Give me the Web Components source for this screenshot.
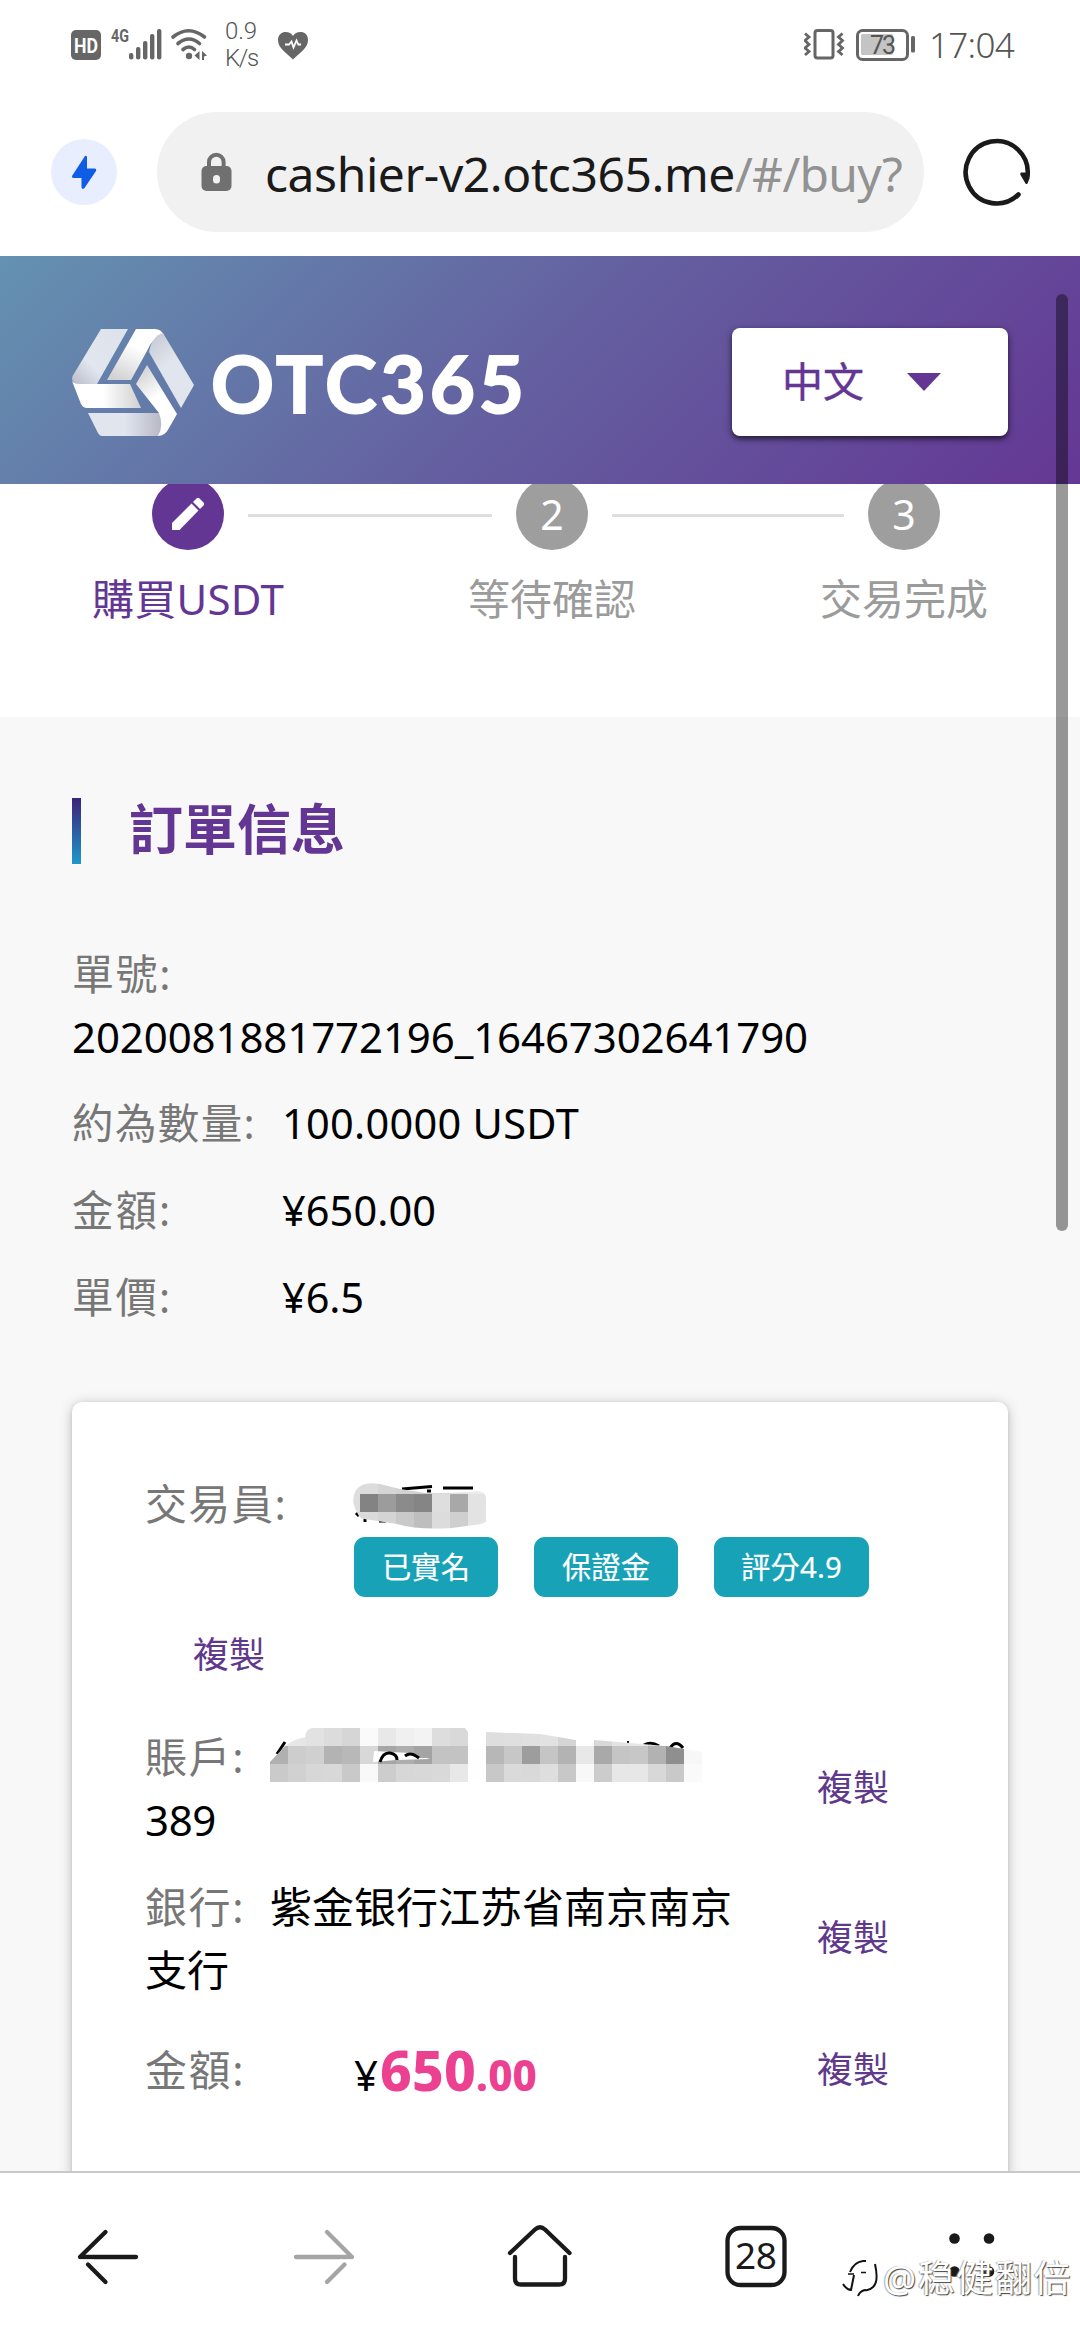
<!DOCTYPE html>
<html lang="zh-Hant">
<head>
<meta charset="utf-8">
<title>OTC365</title>
<style>
html,body{margin:0;padding:0;background:#fff}
body{width:1080px;height:2340px;overflow:hidden;font-family:"Noto Sans","Noto Sans CJK TC",sans-serif;color:#000}
</style>
</head>
<body>
<phone-screen></phone-screen>
<script>
const fits=[];
function define(name,html){
  customElements.define(name,class extends HTMLElement{
    constructor(){super();this.attachShadow({mode:'open'}).innerHTML=html;}
  });
}
/* One line of text, spaced so that it fills the width in its w attribute */
customElements.define('fit-text',class extends HTMLElement{
  constructor(){super();this.attachShadow({mode:'open'}).innerHTML='<style>:host{display:inline-block;white-space:nowrap}</style><slot></slot>';}
  connectedCallback(){if(!fits.includes(this))fits.push(this);}
  fit(){
    const w=+this.getAttribute('w'),n=[...this.textContent].length;
    this.style.letterSpacing=(w-this.getBoundingClientRect().width)/n+'px';
  }
});

define('status-bar',`<style>
:host{display:flex;height:88px;box-sizing:border-box;align-items:flex-start;color:#666;font-family:Roboto,sans-serif}
svg{display:block;flex:none}
.rate{width:53px;height:60px;margin:18px 0 0 14px;font-size:24px;line-height:27px;font-weight:300;color:#555}
.clock{margin:25px 0 0 13px;font:400 35px/40px "Noto Sans",sans-serif;font-weight:300;color:#555}
.sp{flex:1}
text{font-family:Roboto,sans-serif}
</style>
<svg width="211" height="88" viewBox="0 0 211 88">
<rect x="71" y="30" width="30" height="30" rx="5" fill="#666"/><text x="86" y="52.5" font-size="20.5" font-weight="700" fill="#fff" text-anchor="middle" textLength="24" lengthAdjust="spacingAndGlyphs">HD</text>
<text x="111" y="42" font-size="18" font-weight="700" fill="#666" textLength="18" lengthAdjust="spacingAndGlyphs">4G</text>
<g fill="#666"><rect x="129" y="53" width="4.4" height="6.5" rx="2"/><rect x="136" y="47" width="4.4" height="12.5" rx="2"/><rect x="143" y="41" width="4.4" height="18.5" rx="2"/><rect x="150" y="34" width="4.4" height="25.5" rx="2"/><rect x="157" y="29" width="4.4" height="30.5" rx="2"/></g>
<g fill="none" stroke="#666" stroke-width="3.6" stroke-linecap="round"><path d="M173 37Q188.500 24.500 204.500 37"/><path d="M178 43.500Q189 34.500 199.500 43.500"/><path d="M183 49.500Q189 44.500 194.500 49.500"/></g>
<circle cx="189" cy="56" r="3.2" fill="#666"/><path d="M199.500 51v9l-5-4.500zM202 51l5 4.500l-3 1v3.500h-2z" fill="#666"/>
</svg>
<div class="rate"><fit-text w="32">0.9</fit-text><br><fit-text w="33">K/s</fit-text></div>
<svg width="31" height="88" viewBox="277 0 31 88"><path d="M292 59.500C284 52 277 47.500 277 40C277 34.500 281 32 284.500 32C288 32 290.500 33.500 292 36C293.500 33.500 296 32 299.500 32C303.500 32 307 34.500 307 40C307 47.500 300 52 292 59.500Z" fill="#666"/><path d="M284 44.500h4l2.500-3l2 6l3-7l1.800 4h2.700" fill="none" stroke="#fff" stroke-width="1.8"/></svg>
<div class="sp"></div>
<svg width="112" height="88" viewBox="804 0 112 88">
<rect x="815" y="30.500" width="18" height="27.500" rx="2.500" fill="none" stroke="#666" stroke-width="3"/>
<path d="M805 33.500l4 3.500l-4 3.500l4 4l-4 3.500l4 3.500l-4 3.500M842.500 33.500l-4 3.500l4 3.500l-4 4l4 3.500l-4 3.500l4 3.500" fill="none" stroke="#666" stroke-width="2.800"/>
<rect x="857.500" y="30.500" width="50" height="29" rx="5" fill="none" stroke="#666" stroke-width="3"/>
<rect x="861" y="34" width="32" height="21" rx="1.500" fill="#c4c4c4"/><rect x="911" y="36" width="4" height="16.500" rx="1.500" fill="#666"/>
<text x="883" y="54" font-size="25" fill="#555" text-anchor="middle" textLength="26">73</text></svg>
<fit-text class="clock" w="85">17:04</fit-text><div style="width:66px;flex:none"></div>`);

define('url-bar',`<style>
:host{display:flex;height:168px;align-items:center;padding-left:51px;box-sizing:border-box}
.bolt{width:66px;height:66px;border-radius:50%;background:#e8eefd;flex:none}
.pill{display:flex;align-items:center;width:767px;height:120px;border-radius:60px;background:#f1f1f1;margin:0 38px 0 40px;flex:none}
.url{width:642px;margin:4px 0 0 33px;overflow:hidden;white-space:nowrap;font-size:48px;line-height:68px;color:#1a1a1a}
.lk{margin-left:44px;flex:none}.url span{color:#929292}
svg{display:block}
</style>
<div class="bolt"><svg width="66" height="66" viewBox="0 0 66 66"><path d="M34 17L21 37q-.5 2 1.500 2H30.500v9.500q1 2.500 3 .5L45 32q.8-2.500-1.500-2.500H36V18q-.6-2-2-1z" fill="#0f5ce5"/></svg></div>
<div class="pill"><svg class="lk" width="31" height="40" viewBox="0 0 31 40"><path d="M8 16V10a7.300 7.300 0 0 1 14.600 0v6" fill="none" stroke="#707070" stroke-width="4"/><rect x=".5" y="14" width="30" height="25" rx="5" fill="#707070"/><rect x="12" y="23" width="7" height="8.500" rx="3.500" fill="#f1f1f1"/></svg>
<div class="url"><fit-text w="470">cashier-v2.otc365.me</fit-text><span><fit-text w="167">/#/buy?</fit-text></span></div></div>
<svg width="70" height="70" viewBox="961 137 70 70"><path d="M1017.500 194.500A31 31.200 0 1 1 1026.500 176" fill="none" stroke="#1a1a1a" stroke-width="4.600" stroke-linecap="round"/><path d="M1020 172.500h8.500v6l-2 5q-1 1-2 0l-5-8.500q-.8-2 .5-2.500z" fill="#1a1a1a"/></svg>`);

define('site-header',`<style>
:host{display:flex;height:228px;flex:none;align-items:center;padding:24px 72px 0;box-sizing:border-box;background:linear-gradient(135deg,#6492b1 0%,#645fa0 50%,#643794 100%)}
.word{margin:2px 0 0 16px;color:#fff;font:700 78px/80px Lato,sans-serif;-webkit-text-stroke:2px #fff}
.lang{margin-left:auto;display:flex;align-items:center;width:276px;height:108px;background:#fff;border-radius:8px;box-sizing:border-box;padding-left:50px;color:#643694;font-size:41px;-webkit-text-stroke:.4px #643694;box-shadow:0 3px 5px rgba(0,0,0,.5),0 2px 9px rgba(0,0,0,.25)}
.lang svg{margin-left:43px}
.lang span{line-height:60px;margin-top:-3px}
</style>
<svg width="123" height="109" viewBox="0 0 123 109">
<defs><linearGradient id="a" x1="1" y1="0" x2="0" y2="1"><stop offset="0" stop-color="#dce2ec"/><stop offset=".65" stop-color="#e2e6ee"/><stop offset="1" stop-color="#b8bcc8"/></linearGradient>
<linearGradient id="b" x1=".7" y1="0" x2=".2" y2="1"><stop offset=".35" stop-color="#fff"/><stop offset="1" stop-color="#d2d2d4"/></linearGradient>
<linearGradient id="c" x1="0" x2="1"><stop offset=".45" stop-color="#fff"/><stop offset="1" stop-color="#d0d0d2"/></linearGradient>
<linearGradient id="d" x1="0" y1="0" x2=".5" y2="1"><stop offset="0" stop-color="#c2c6d0"/><stop offset=".5" stop-color="#e0e5ee"/></linearGradient>
<linearGradient id="e" x1="0" x2="1"><stop offset=".5" stop-color="#e0e5ee"/><stop offset="1" stop-color="#b6b9c4"/></linearGradient>
<linearGradient id="f" x1=".2" y1="0" x2=".6" y2="1"><stop offset="0" stop-color="#d0d0d2"/><stop offset=".5" stop-color="#fff"/></linearGradient></defs>
<path d="M29 1H56L25 56H7Q1 56 0 51Q0 48 3 44Z" fill="url(#a)"/>
<path d="M64 1H83Q89 1 92 7Q80 10 75 23L59 52H35Z" fill="url(#b)"/>
<path d="M77 24Q80 8 91 5L122 57L109 80Z" fill="url(#d)"/>
<path d="M0 53Q2 56 8 56H58L69 80H15Q11 80 9 76Z" fill="url(#c)"/>
<path d="M16 85H88Q92 97 87 108H30Q27 108 25 103Z" fill="url(#e)"/>
<path d="M75 37L105 86L97 100Q93 108 86 108Q92 98 87 85L64 56Z" fill="url(#f)"/>
</svg>
<fit-text class="word" w="317">OTC365</fit-text>
<div class="lang"><span>中文</span><svg width="34" height="18" viewBox="0 0 34 18"><path d="M0 0H34L17 18Z" fill="#643694"/></svg></div>`);

define('step-item',`<style>
:host{display:flex;flex-direction:column;align-items:center;width:72px;flex:none;color:#9b9b9b;font-size:42px}
.dot{display:flex;align-items:center;justify-content:center;width:72px;height:72px;border-radius:50%;background:#9e9e9e;color:#fff;font-size:41px;line-height:50px;box-sizing:border-box}
:host([active]){color:#643694}:host([active]) .dot{background:#643694}
.label{margin-top:19px;white-space:nowrap;line-height:60px}
</style><div class="dot"><slot name="mark"></slot></div><div class="label"><slot></slot></div>`);

define('step-track',`<style>
:host{display:block;height:233px;flex:none;overflow:hidden;background:#fff}
.row{display:flex;margin-top:-6px;padding-left:152px;gap:24px}
i{height:3px;background:#dedede;margin-top:36px;flex:none}
</style><div class="row">
<step-item active><svg slot="mark" width="34" height="34" viewBox="0 0 34 34"><path d="M1 26L20.500 6.500L27.500 13.500L8.500 33H1Z" fill="#fff"/><path d="M22 5L25.500 1.500Q27 0 28.500 1.500L32.500 5.500Q34 7 32.500 8.500L29 12Z" fill="#fff"/></svg><fit-text w="192">購買USDT</fit-text></step-item>
<i style="width:244px"></i><step-item><span slot="mark">2</span>等待確認</step-item>
<i style="width:232px"></i><step-item><span slot="mark">3</span>交易完成</step-item></div>`);

define('info-row',`<style>
:host{display:flex;font-size:41.500px;line-height:63px;margin-bottom:24px}
.k{width:210px;flex:none;color:#777;white-space:nowrap}
</style><div class="k"><slot name="k"></slot></div><div><slot></slot></div>`);

define('copy-link',`<style>:host{display:block;color:#5f3a8c;font-size:36px;line-height:54px;white-space:nowrap}</style><slot></slot>`);
define('tag-badge',`<style>:host{display:flex;align-items:center;justify-content:center;box-sizing:border-box;min-width:144px;height:60px;padding:0 27px 3px;border-radius:11px;background:#17a2b8;color:#fff;font-size:29.300px;-webkit-text-stroke:.2px #fff;white-space:nowrap}</style><slot></slot>`);

define('pay-row',`<style>
:host{display:flex;align-items:center;margin-bottom:24px;font-size:42px;line-height:63px;min-height:63px}
.main{width:672px;flex:none}
</style><div class="main"><slot></slot></div><slot name="action"></slot>`);

/* Pixelated cover over private values, built of 18px cells */
customElements.define('mosaic-mask',class extends HTMLElement{
  constructor(){super();this.attachShadow({mode:'open'});}
  connectedCallback(){
    const name=this.getAttribute('kind')==='name';
    const rows=name?[['dcdcdc','d5d5d5','d2d2d2','d0d0d0','dadada','e4e4e4','ececec','ececec'],['838383','9c9c9c','8b8b8b','858585','dedede','a8a8a8','e3e3e3','e3e3e3'],['dadadb','d4d4d4','c9c9c9','bebebe','dcdcdc','cfcfcf','e3e3e3','e3e3e3']]
    :[['ececec','e6e6e6','e2e2e2','dcdcdc','d6d6d6','fafafa','e8e8e8','f0f0f0','f3f3f3','dddddd','d9d9d9','fefefe','dedede','dfdfdf','e0e0e0','e2e2e2','d5d5d5','fefefe','d8d8d8','e3e3e3','e7e7e7','dadada','d6d6d6','fafafa'],
      ['b0b0b0','cdcdcd','d0d0d0','b3b3b3','b8b8b8','d8d8d8','a6a6a6','adadad','a4a4a4','c3c3c3','c3c3c3','fefefe','b7b7b7','c7c7c7','9d9d9d','c5c5c5','b3b3b3','e8e8e8','a9a9a9','c5c5c5','c7c7c7','b2b2b2','8f8f8f','f7f7f7'],
      ['cacaca','d1d1d1','d7d7d7','d8d8d8','c9c9c9','f9f9f9','cdcdcd','d7d7d7','d8d8d8','d9d9d9','e8e8e8','fefefe','c8c8c8','dadada','d9d9d9','dedede','c8c8c8','f8f8f8','cccccc','e7e7e7','e7e7e7','d8d8d8','c9c9c9','fafafa']];
    /* the name cover starts one partial cell (6px) before the first full cell */
    const off=name?6:0;
    const cells=(name?'<rect x="-4" width="10" height="54" fill="#dedede"/>':'')+rows.map((r,y)=>r.map((c,x)=>`<rect x="${x*18+off}" y="${y*18}" width="18.200" height="18.200" fill="#${c}"/>`).join('')).join('');
    const W=name?144:432;
    const clip=name?'M3 36Q-4 25 2 14Q8 5 26 8L46 13L72 17Q108 17 124 15Q132 16 132 22V45Q131 48 120 49L98 52Q63 54 43 48L10 43Q5 42 3 36Z'
      :'M0 34L15 18Q22 12 35 9Q36 1 42 0H195L198 4V54H0ZM216 4L270 6L306 12V18H324V12L348 14L396 18L432 24V54H216ZM198 18H216V54H198ZM306 18H324V54H306Z';
    const ink=name?'<path d="M48 13L78 10.500M89 12H119M11 41v5M25 45h7M2 37l3 3M73 15h4" stroke="#000" stroke-width="3" fill="none"/>'
      :'<path d="M7 26L15 14M357 14.500h2M374 17q7-4 15 1M400 20q6-9 13 0" stroke="#000" stroke-width="3" fill="none"/>';
    const hole=name?'':'<path d="M104 23L140 25L160 31L126 32L103 34Z" fill="#fff"/><path d="M140 25L160 30L149 30Z" fill="#a4a4a4"/><path d="M110 34q3-10 10-9q7 1 7 7M135 28q5-4 11 0l3 2" fill="none" stroke="#000" stroke-width="3"/>';
    this.shadowRoot.innerHTML=`<style>:host{display:inline-block;vertical-align:top;height:54px}svg{display:block;overflow:visible}</style><svg width="${W}" height="54" viewBox="0 0 ${W} 54"><clipPath id="m"><path d="${clip}"/></clipPath>${ink}<g clip-path="url(#m)" shape-rendering="crispEdges">${cells}</g>${hole}</svg>`;
  }
});

define('pay-card',`<style>
:host{display:block;width:936px;height:820px;box-sizing:border-box;margin-top:73px;padding:71px 0 0 73px;background:#fff;border-radius:10px;box-shadow:0 2px 14px rgba(0,0,0,.22),0 2px 5px rgba(0,0,0,.12)}
.k{color:#777}
.trader{display:flex;font-size:42px;line-height:61px;height:64px}
.trader .k{width:209px}
.badges{display:flex;gap:36px;margin:0 0 31px 209px}
copy-link.first{margin:0 0 43px 48px}
.l{display:flex;height:63px;white-space:nowrap}
.l .k{width:125px}
.amt .k{width:209px;line-height:90px;align-self:flex-start}
.amt{align-items:baseline;height:90px;line-height:90px}
b{color:#ec4191;font:800 55px/90px "Noto Sans",sans-serif}
b.s{font-size:42px}
</style>
<div class="trader"><span class="k"><fit-text w="142">交易員:</fit-text></span><mosaic-mask kind="name" style="margin-top:3px"></mosaic-mask></div>
<div class="badges"><tag-badge>已實名</tag-badge><tag-badge>保證金</tag-badge><tag-badge><fit-text w="101">評分4.9</fit-text></tag-badge></div>
<copy-link class="first">複製</copy-link>
<pay-row><div class="l"><span class="k"><fit-text w="100">賬戶:</fit-text></span><mosaic-mask kind="account" style="margin-top:3px"></mosaic-mask></div><div class="l"><fit-text w="71">389</fit-text></div><copy-link slot="action">複製</copy-link></pay-row>
<pay-row><div class="l"><span class="k"><fit-text w="100">銀行:</fit-text></span><span lang="zh-Hans" style="font-family:'Noto Sans','Noto Sans CJK SC',sans-serif">紫金银行江苏省南京南京</span></div><div class="l">支行</div><copy-link slot="action">複製</copy-link></pay-row>
<pay-row><div class="l amt"><span class="k"><fit-text w="100">金額:</fit-text></span><fit-text w="26">¥</fit-text><b><fit-text w="96">650</fit-text></b><b class="s"><fit-text w="61">.00</fit-text></b></div><copy-link slot="action">複製</copy-link></pay-row>`);

define('order-info',`<style>
:host{display:block;flex:1;background:#f8f8f8;padding:81px 72px 0;box-sizing:border-box}
h2{display:flex;align-items:center;height:66px;margin:0 0 78px;font-size:54px;font-weight:700;line-height:66px;color:#643694}
h2::before{content:"";width:9px;height:66px;margin-right:48px;background:linear-gradient(#3a2278,#1f97cb)}
h2 span{margin-top:-4px}
.no{font-size:42px;line-height:63px;margin-bottom:24px}.no span{color:#777}
</style>
<h2><span>訂單信息</span></h2>
<div class="no"><span><fit-text w="100">單號:</fit-text></span><br><fit-text w="736">2020081881772196_16467302641790</fit-text></div>
<info-row><fit-text slot="k" w="184">約為數量:</fit-text><fit-text w="297">100.0000 USDT</fit-text></info-row>
<info-row><fit-text slot="k" w="100">金額:</fit-text><fit-text w="154">¥650.00</fit-text></info-row>
<info-row><fit-text slot="k" w="100">單價:</fit-text><fit-text w="82">¥6.5</fit-text></info-row>
<pay-card></pay-card>`);

define('water-mark',`<style>
:host{position:absolute;right:8px;bottom:35px;display:flex;align-items:center;color:#fff;font:400 37px/54px "Noto Sans","Noto Sans CJK SC",sans-serif;text-shadow:1px 1px 1px #444,-1px 0 1px #aaa;white-space:nowrap}
svg{margin-right:4px;margin-top:2px}
</style><svg width="37" height="40" viewBox="841 2266 37 40"><path d="M849 2279Q853 2269 862 2268H865" fill="none" stroke="#111" stroke-width="2"/><path d="M847 2281H853M860 2279.500H865" fill="none" stroke="#111" stroke-width="1.600"/><path d="M853 2282L850 2297Q846 2297 842 2291M874 2271Q878 2289 872 2294Q868 2298 864 2297Q859 2298 857 2303" fill="none" stroke="#111" stroke-width="2"/></svg><fit-text w="189">@稳健翻倍</fit-text>`);

define('nav-bar',`<style>
:host{display:flex;height:169px;flex:none;box-sizing:border-box;border-top:2px solid #c8c8c8;background:#fff;position:relative}
div{width:216px;display:flex;justify-content:center;padding-top:49px}
svg{display:block}
.st{fill:none;stroke:#1a1a1a;stroke-width:4.300;stroke-linecap:round;stroke-linejoin:round}
.n{font:400 37px "Noto Sans",sans-serif;fill:#1a1a1a}
</style>
<div><svg width="72" height="72" viewBox="72 2222 72 72"><path class="st" d="M136 2257H80L105.500 2232"/><path class="st" d="M105.500 2282L88 2264.500"/><path d="M80 2259.500H94V2262H80Z" fill="#fff"/></svg></div>
<div><svg width="72" height="72" viewBox="288 2222 72 72"><path class="st" style="stroke:#a5a5a5" d="M296 2257H352L327 2232M327 2282L344.500 2264.500"/><path d="M340 2259.500H354V2262H340Z" fill="#fff"/></svg></div>
<div><svg width="72" height="72" viewBox="504 2222 72 72"><path class="st" d="M510 2253L535 2229.500Q540 2225 545 2229.500L569.500 2253M515 2257V2279Q515 2284.500 521 2284.500H559Q565 2284.500 565 2279V2257"/></svg></div>
<div><svg width="72" height="72" viewBox="720 2222 72 72"><rect class="st" x="727.500" y="2228" width="57" height="57" rx="13"/><text class="n" x="756" y="2269" text-anchor="middle" textLength="42">28</text></svg></div>
<div><svg width="72" height="72" viewBox="936 2222 72 72" fill="#1a1a1a"><circle cx="954.500" cy="2238.500" r="5.300"/><circle cx="989" cy="2238.500" r="5.300"/><circle cx="954.500" cy="2271.500" r="5.300"/><circle cx="989" cy="2271.500" r="5.300"/></svg></div>
<water-mark></water-mark>`);

define('scroll-thumb',`<style>:host{position:absolute;right:12px;top:294px;width:12px;height:937px;border-radius:6px;background:rgba(0,0,0,.4)}</style>`);

define('phone-screen',`<style>
:host{display:flex;flex-direction:column;width:1080px;height:2340px;position:relative;overflow:hidden;background:#fff}
main{display:flex;flex-direction:column;height:1915px;overflow:hidden;flex:none}
</style><status-bar></status-bar><url-bar></url-bar><main><site-header></site-header><step-track></step-track><order-info></order-info></main><nav-bar></nav-bar><scroll-thumb></scroll-thumb>`);
fits.forEach(f=>f.fit());
</script>
</body>
</html>
